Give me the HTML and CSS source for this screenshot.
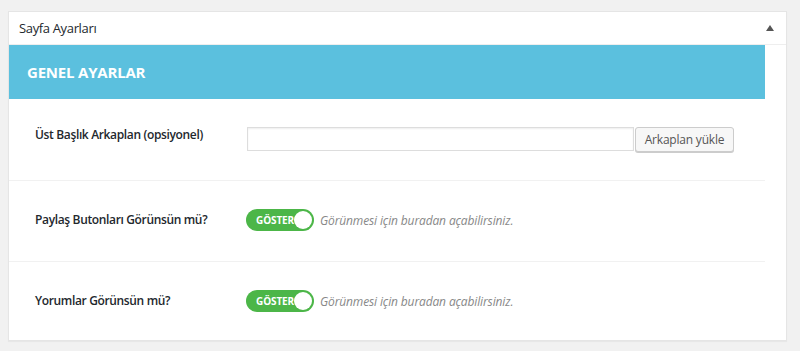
FILE: index.html
```html
<!DOCTYPE html>
<html lang="tr">
<head>
<meta charset="utf-8">
<title>Sayfa Ayarları</title>
<link rel="stylesheet" href="styles.css">
</head>
<body>
<div class="postbox">
  <div class="postbox-header">
    <h2 class="postbox-title">Sayfa Ayarları</h2>
    <span class="toggle-arrow" aria-hidden="true"></span>
  </div>
  <div class="inside">
    <div class="section-title">GENEL AYARLAR</div>
    <div class="field-row field-row--top">
      <label class="field-label">Üst Başlık Arkaplan (opsiyonel)</label>
      <div class="field-control">
        <input class="text-input" type="text">
        <button class="upload-button" type="button">Arkaplan yükle</button>
      </div>
    </div>
    <div class="field-row">
      <label class="field-label">Paylaş Butonları Görünsün mü?</label>
      <div class="field-control">
        <span class="switch"><span class="switch-text">GÖSTER</span><span class="switch-knob"></span></span>
        <span class="description">Görünmesi için buradan açabilirsiniz.</span>
      </div>
    </div>
    <div class="field-row">
      <label class="field-label">Yorumlar Görünsün mü?</label>
      <div class="field-control">
        <span class="switch"><span class="switch-text">GÖSTER</span><span class="switch-knob"></span></span>
        <span class="description">Görünmesi için buradan açabilirsiniz.</span>
      </div>
    </div>
  </div>
</div>
</body>
</html>
```
FILE: styles.css
```css
html, body {
  margin: 0;
  padding: 0;
}
body {
  background: #f1f1f1;
  font-family: "Open Sans", "Liberation Sans", sans-serif;
  color: #23282d;
  height: 351px;
  overflow: hidden;
}
.postbox {
  margin: 11px 0 0 8px;
  width: 779px;
  height: 330px;
  box-sizing: border-box;
  background: #fff;
  border: 1px solid #e5e5e5;
  box-shadow: 0 1px 1px rgba(0,0,0,0.04);
}
.postbox-header {
  height: 32px;
  border-bottom: 1px solid #eee;
  display: flex;
  align-items: center;
  justify-content: space-between;
  padding: 0 12px 0 10px;
}
.postbox-title {
  margin: 0;
  font-size: 13px;
  font-weight: 400;
  letter-spacing: -0.35px;
  color: #23282d;
  line-height: 18px;
}
.toggle-arrow {
  width: 0;
  height: 0;
  border-left: 4px solid transparent;
  border-right: 4px solid transparent;
  border-bottom: 6px solid #555;
  margin-top: -1px;
}
.inside {
  margin-right: 21px;
}
.section-title {
  height: 54px;
  background: #5bc0de;
  color: #fff;
  font-size: 15px;
  font-weight: 700;
  letter-spacing: -0.2px;
  display: flex;
  align-items: center;
  padding-left: 18px;
}
.field-row {
  display: flex;
  align-items: center;
  padding: 28px 0 30px 26px;
  border-bottom: 1px solid #f1f1f1;
}
.field-row:last-child {
  border-bottom: none;
}
.field-row--top {
  align-items: flex-start;
  padding-bottom: 28px;
}
.field-row--top .field-label {
  margin-top: -1px;
}
.field-label {
  width: 212px;
  flex: none;
  font-size: 12px;
  font-weight: 600;
  letter-spacing: -0.35px;
  line-height: 18px;
  color: #23282d;
}
.field-control {
  display: flex;
  align-items: flex-start;
}
.field-row:not(.field-row--top) .field-control {
  align-items: center;
}
.text-input {
  width: 387px;
  height: 24px;
  box-sizing: border-box;
  border: 1px solid #ddd;
  box-shadow: inset 0 1px 2px rgba(0,0,0,0.07);
  margin: 0;
  padding: 2px 6px;
  font: inherit;
}
.upload-button {
  margin: 0 0 0 1px;
  height: 25px;
  width: 99px;
  box-sizing: border-box;
  background: #f7f7f7;
  border: 1px solid #ccc;
  border-radius: 3px;
  box-shadow: 0 1px 0 #ccc;
  color: #555;
  font-family: "Open Sans", "Liberation Sans", sans-serif;
  font-size: 12px;
  letter-spacing: -0.2px;
  white-space: nowrap;
  padding: 0;
}
.switch {
  margin-left: -1px;
  width: 68px;
  height: 22px;
  border-radius: 11px;
  background: #4cb648;
  display: flex;
  align-items: center;
  justify-content: space-between;
  box-sizing: border-box;
  padding: 0 2px 0 10px;
}
.switch-text {
  color: #fff;
  font-size: 10px;
  font-weight: 700;
  letter-spacing: -0.1px;
}
.switch-knob {
  width: 18px;
  height: 18px;
  border-radius: 50%;
  background: #fff;
}
.description {
  margin-left: 6px;
  font-size: 12px;
  font-style: italic;
  letter-spacing: -0.13px;
  color: #888;
}
```
